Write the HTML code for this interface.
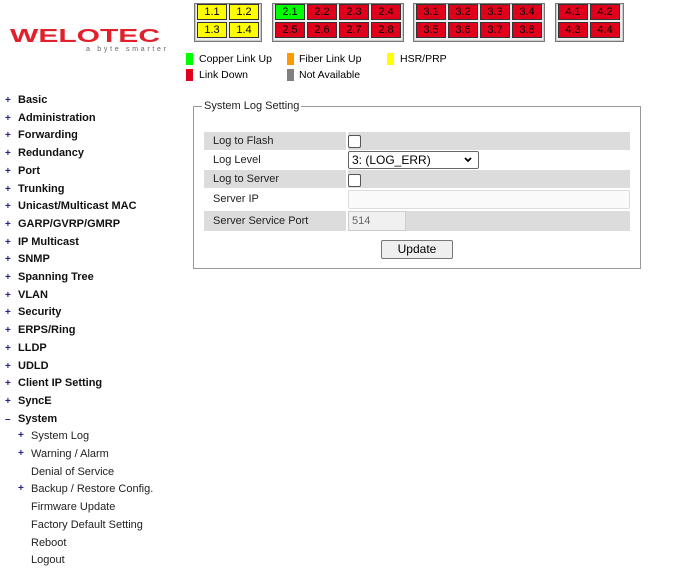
<!DOCTYPE html>
<html><head><meta charset="utf-8"><style>
body{margin:0;width:675px;height:581px;background:#fff;font-family:"Liberation Sans",Arial,sans-serif;position:relative;overflow:hidden}
.a{position:absolute}
.grp{position:absolute;top:3px;height:37px;border:1px solid #777;box-shadow:inset 0 0 0 1px #ccc;background:#eee}
.c{position:absolute;width:28px;height:14px;border:1px solid #333;font-size:11px;line-height:14px;text-align:center;color:#000}
.r{background:#e0001b}.y{background:#ffff00}.g{background:#00ff00}
.sq{position:absolute;width:7px;height:12px}
.lg{position:absolute;font-size:10.5px;color:#000}
.m{position:absolute;left:5px;font-size:11px;font-weight:bold;color:#111}
.m b{color:#22228a;display:inline-block;width:13px;font-size:10px}
.s{position:absolute;left:31px;font-size:11px;color:#222}
.s b{position:absolute;left:-13px;color:#22228a;font-size:10px}
.row{position:absolute;left:204px;width:426px;font-size:11px;color:#222}
.row span{position:absolute;left:9px}
.gr{background:#dcdcdc}
.gr:after{content:"";position:absolute;left:142px;top:0;bottom:0;width:2px;background:#fff}
.cb{position:absolute;width:11px;height:11px;border:1px solid #555;border-radius:2px;background:#fff}
</style></head><body>
<svg class="a" style="left:8px;top:26px" width="160" height="28"><text x="2" y="16" textLength="150" lengthAdjust="spacingAndGlyphs" font-family="Liberation Sans" font-weight="bold" font-size="18" fill="#e0202a">WELOTEC</text><text x="78" y="25" textLength="80" lengthAdjust="spacing" font-family="Liberation Sans" font-size="7" fill="#666">a byte smarter</text></svg>

<div class="grp" style="left:194px;width:66px"></div>
<div class="grp" style="left:272px;width:130px"></div>
<div class="grp" style="left:413px;width:130px"></div>
<div class="grp" style="left:555px;width:67px"></div>
<div class="c y" style="left:197px;top:4px">1.1</div><div class="c y" style="left:229px;top:4px">1.2</div>
<div class="c y" style="left:197px;top:22px">1.3</div><div class="c y" style="left:229px;top:22px">1.4</div>
<div class="c g" style="left:275px;top:4px">2.1</div><div class="c r" style="left:307px;top:4px">2.2</div><div class="c r" style="left:339px;top:4px">2.3</div><div class="c r" style="left:371px;top:4px">2.4</div>
<div class="c r" style="left:275px;top:22px">2.5</div><div class="c r" style="left:307px;top:22px">2.6</div><div class="c r" style="left:339px;top:22px">2.7</div><div class="c r" style="left:371px;top:22px">2.8</div>
<div class="c r" style="left:416px;top:4px">3.1</div><div class="c r" style="left:448px;top:4px">3.2</div><div class="c r" style="left:480px;top:4px">3.3</div><div class="c r" style="left:512px;top:4px">3.4</div>
<div class="c r" style="left:416px;top:22px">3.5</div><div class="c r" style="left:448px;top:22px">3.6</div><div class="c r" style="left:480px;top:22px">3.7</div><div class="c r" style="left:512px;top:22px">3.8</div>
<div class="c r" style="left:558px;top:4px">4.1</div><div class="c r" style="left:590px;top:4px">4.2</div>
<div class="c r" style="left:558px;top:22px">4.3</div><div class="c r" style="left:590px;top:22px">4.4</div>

<div class="sq" style="left:186px;top:53px;background:#00ff00"></div><div class="lg" style="left:199px;top:53px">Copper Link Up</div>
<div class="sq" style="left:287px;top:53px;background:#ff9900"></div><div class="lg" style="left:299px;top:53px">Fiber Link Up</div>
<div class="sq" style="left:387px;top:53px;background:#ffff00"></div><div class="lg" style="left:400px;top:53px">HSR/PRP</div>
<div class="sq" style="left:186px;top:69px;background:#e0001b"></div><div class="lg" style="left:199px;top:69px">Link Down</div>
<div class="sq" style="left:287px;top:69px;background:#808080"></div><div class="lg" style="left:299px;top:69px">Not Available</div>

<div class="m" style="top:94px"><b>+</b>Basic</div>
<div class="m" style="top:111.7px"><b>+</b>Administration</div>
<div class="m" style="top:129.4px"><b>+</b>Forwarding</div>
<div class="m" style="top:147.1px"><b>+</b>Redundancy</div>
<div class="m" style="top:164.8px"><b>+</b>Port</div>
<div class="m" style="top:182.5px"><b>+</b>Trunking</div>
<div class="m" style="top:200.2px"><b>+</b>Unicast/Multicast MAC</div>
<div class="m" style="top:217.9px"><b>+</b>GARP/GVRP/GMRP</div>
<div class="m" style="top:235.6px"><b>+</b>IP Multicast</div>
<div class="m" style="top:253.3px"><b>+</b>SNMP</div>
<div class="m" style="top:271px"><b>+</b>Spanning Tree</div>
<div class="m" style="top:288.7px"><b>+</b>VLAN</div>
<div class="m" style="top:306.4px"><b>+</b>Security</div>
<div class="m" style="top:324.1px"><b>+</b>ERPS/Ring</div>
<div class="m" style="top:341.8px"><b>+</b>LLDP</div>
<div class="m" style="top:359.5px"><b>+</b>UDLD</div>
<div class="m" style="top:377.2px"><b>+</b>Client IP Setting</div>
<div class="m" style="top:394.9px"><b>+</b>SyncE</div>
<div class="m" style="top:412.6px"><b>–</b>System</div>
<div class="s" style="top:430.3px"><b>+</b>System Log</div>
<div class="s" style="top:448px"><b>+</b>Warning / Alarm</div>
<div class="s" style="top:465.7px">Denial of Service</div>
<div class="s" style="top:483.4px"><b>+</b>Backup / Restore Config.</div>
<div class="s" style="top:501.1px">Firmware Update</div>
<div class="s" style="top:518.8px">Factory Default Setting</div>
<div class="s" style="top:536.5px">Reboot</div>
<div class="s" style="top:554.2px">Logout</div>

<div class="a" style="left:193px;top:106px;width:446px;height:161px;border:1px solid #999"></div>
<div class="a" style="left:202px;top:100px;background:#fff;padding:0 2px;font-size:11px;color:#222">System Log Setting</div>

<div class="row gr" style="top:132px;height:18px"><span style="top:3px">Log to Flash</span></div>
<div class="cb" style="left:348px;top:135px"></div>
<div class="row" style="top:150px;height:20px"><span style="top:4px">Log Level</span></div>
<div class="a" style="left:348px;top:151px;width:129px;height:16px;border:1px solid #666;border-radius:2px;font-size:12px;line-height:16px;background:#fff"><span style="margin-left:3px">3: (LOG_ERR)</span>
<svg class="a" style="right:6px;top:5px" width="8" height="6"><path d="M1 1L4 4L7 1" stroke="#000" stroke-width="1.8" fill="none"/></svg></div>
<div class="row gr" style="top:170px;height:18px"><span style="top:3px">Log to Server</span></div>
<div class="cb" style="left:348px;top:174px"></div>
<div class="row" style="top:188px;height:23px"><span style="top:5px">Server IP</span></div>
<div class="a" style="left:348px;top:190px;width:280px;height:17px;border:1px solid #ddd;border-radius:2px;background:#fafafa"></div>
<div class="row gr" style="top:211px;height:20px"><span style="top:4px">Server Service Port</span></div>
<div class="a" style="left:348px;top:211px;width:56px;height:18px;border:1px solid #ccc;background:#f0f0f0;font-size:11px;line-height:18px;color:#666"><span style="margin-left:3px">514</span></div>
<div class="a" style="left:381px;top:240px;width:70px;height:17px;border:1px solid #777;border-radius:2px;background:#efefef;font-size:12px;line-height:17px;text-align:center">Update</div>
</body></html>
